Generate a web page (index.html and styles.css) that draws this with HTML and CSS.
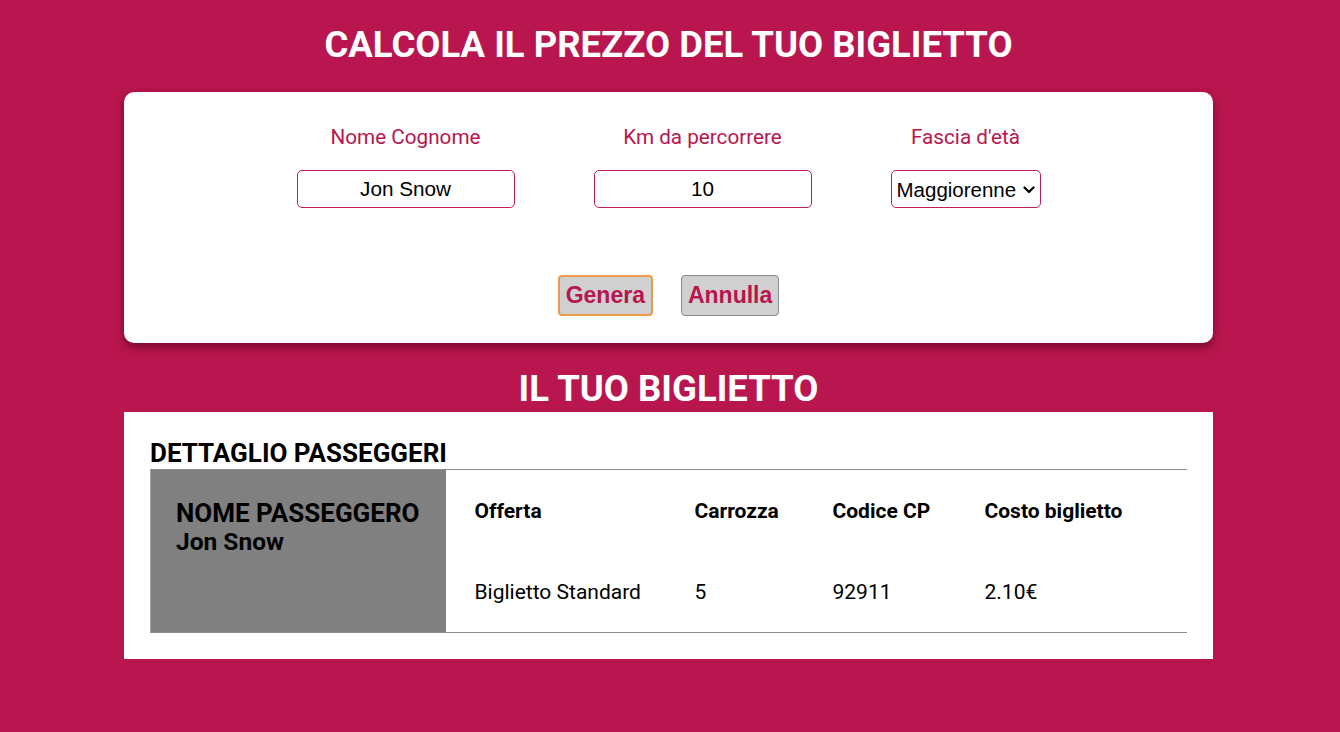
FILE: index.html
```html
<!DOCTYPE html>
<html lang="it">
<head>
<meta charset="utf-8">
<title>Calcola il prezzo del tuo biglietto</title>
<link rel="stylesheet" href="styles.css">
</head>
<body>
<main class="page">
<h1 class="page-title">CALCOLA IL PREZZO DEL TUO BIGLIETTO</h1>
<form class="card">
  <div class="fields">
    <div class="field field-wide">
      <label class="field-label" for="nome">Nome Cognome</label>
      <input class="field-input" id="nome" type="text" value="Jon Snow">
    </div>
    <div class="field field-wide">
      <label class="field-label" for="km">Km da percorrere</label>
      <input class="field-input" id="km" type="text" value="10">
    </div>
    <div class="field field-narrow">
      <label class="field-label" for="eta">Fascia d'età</label>
      <div class="select-wrap">
        <select class="field-select" id="eta">
          <option>Maggiorenne</option>
          <option>Minorenne</option>
          <option>Over 65</option>
        </select>
        <svg class="select-chevron" width="12" height="8" viewBox="0 0 12 8"><path d="M1.5 1.5 L6 6 L10.5 1.5" fill="none" stroke="#000" stroke-width="2.2" stroke-linecap="round" stroke-linejoin="round"/></svg>
      </div>
    </div>
  </div>
  <div class="actions">
    <button type="button" class="btn btn-focus">Genera</button>
    <button type="button" class="btn">Annulla</button>
  </div>
</form>
<h2 class="page-title second">IL TUO BIGLIETTO</h2>
<section class="ticket">
  <h3 class="ticket-title">DETTAGLIO PASSEGGERI</h3>
  <table class="ticket-table">
    <colgroup>
      <col class="c-name">
      <col class="c-offer">
      <col class="c-car">
      <col class="c-code">
      <col class="c-cost">
    </colgroup>
    <tr>
      <td class="passenger" rowspan="2">
        <div class="passenger-label">NOME PASSEGGERO</div>
        <div class="passenger-name">Jon Snow</div>
      </td>
      <th>Offerta</th>
      <th>Carrozza</th>
      <th>Codice CP</th>
      <th>Costo biglietto</th>
    </tr>
    <tr>
      <td>Biglietto Standard</td>
      <td>5</td>
      <td>92911</td>
      <td>2.10€</td>
    </tr>
  </table>
</section>
</main>
</body>
</html>
```
FILE: styles.css
```css
* { box-sizing: border-box; }

body {
  margin: 0;
  background: #b9154e;
  font-family: Roboto, "Liberation Sans", Arial, sans-serif;
}

.page {
  width: 1337px;
  display: block;
}

.page-title {
  margin: 25px 0 0;
  color: #fff;
  font-size: 36.5px;
  font-weight: 700;
  line-height: 40px;
  text-align: center;
}

.page-title.second {
  margin: 26px 0 3px;
}

.card {
  width: 1089px;
  margin: 27px auto 0;
  background: #fff;
  border-radius: 10px;
  box-shadow: 0 4px 8px rgba(60, 0, 20, 0.55);
  padding: 33px 0 27px;
}

.fields {
  display: flex;
  justify-content: center;
  gap: 79px;
}

.field {
  display: flex;
  flex-direction: column;
  align-items: center;
  gap: 21px;
}

.field-wide { width: 218px; }
.field-narrow { width: 150px; }

.field-label {
  color: #b9154e;
  font-size: 20.7px;
  line-height: 24px;
  white-space: nowrap;
}

.field-input {
  width: 218px;
  height: 38px;
  border: 1px solid #c21d58;
  border-radius: 5px;
  font-family: "Liberation Sans", Arial, sans-serif;
  font-size: 20.7px;
  color: #000;
  text-align: center;
  padding: 0 4px;
  background: #fff;
}

.select-wrap {
  position: relative;
  width: 150px;
  height: 38px;
}

.field-select {
  appearance: none;
  -webkit-appearance: none;
  width: 150px;
  height: 38px;
  border: 1px solid #c21d58;
  border-radius: 5px;
  background: #fff;
  font-family: "Liberation Sans", Arial, sans-serif;
  font-size: 20.5px;
  color: #000;
  padding: 0 0 0 5px;
}

.select-chevron {
  position: absolute;
  right: 6px;
  top: 16px;
  pointer-events: none;
}

.actions {
  display: flex;
  justify-content: center;
  gap: 28px;
  margin-top: 67px;
}

.btn {
  height: 41px;
  padding: 0 6px;
  background: #d0d0d0;
  border: 1px solid #8a8a8a;
  border-radius: 4px;
  color: #b9154e;
  font-family: "Liberation Sans", Arial, sans-serif;
  font-size: 23px;
  font-weight: 700;
}

.btn-focus {
  border: 2px solid #ee9a4a;
}

.ticket {
  width: 1089px;
  margin: 0 auto;
  background: #fff;
  padding: 26px 26px 26px;
}

.ticket-title {
  margin: 0;
  font-size: 26px;
  line-height: 31px;
  font-weight: 700;
  color: #000;
}

.ticket-table {
  width: 100%;
  table-layout: fixed;
  border-collapse: collapse;
  border-top: 1px solid #8c8c8c;
  border-bottom: 1px solid #8c8c8c;
  font-size: 21px;
  color: #000;
}

.c-name { width: 295px; }
.c-offer { width: 220px; }
.c-car { width: 138px; }
.c-code { width: 152px; }

.ticket-table th,
.ticket-table td {
  height: 81.5px;
  padding: 0 0 0 29px;
  text-align: left;
  vertical-align: middle;
}

.ticket-table th { font-weight: 700; }
.ticket-table td { font-weight: 400; }

.ticket-table td.passenger {
  background: #808080;
  border-left: 1px solid #a6a6a6;
  vertical-align: top;
  padding: 29px 0 0 25px;
}

.passenger-label {
  font-size: 26px;
  font-weight: 700;
  line-height: 28px;
}

.passenger-name {
  font-size: 24.5px;
  font-weight: 700;
  line-height: 29px;
}
```
